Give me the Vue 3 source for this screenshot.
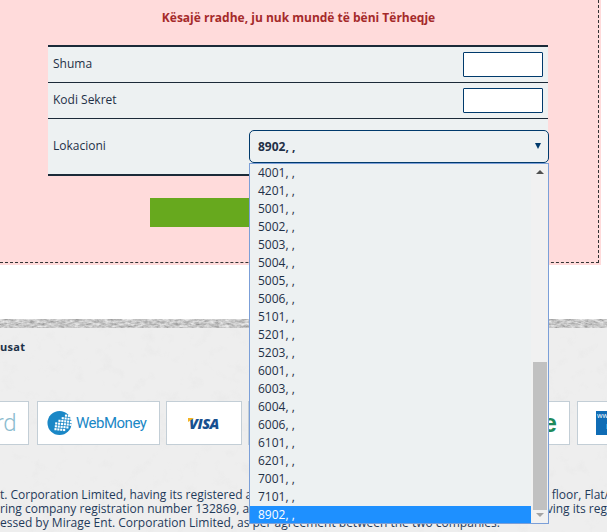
<script setup>
const options = ['4001','4201','5001','5002','5003','5004','5005','5006','5101','5201','5203','6001','6003','6004','6006','6101','6201','7001','7101','8902']
const dots = []
for (let r = 0; r < 6; r++) for (let c = 0; c < 6; c++) {
  if (r + c > 2 && r + c < 9 || r===2&&c===1) dots.push({ x: 10 + c * 3.1 - r * 0.4, y: 4 + r * 3.1 + c * 0.3 })
}
</script>

<template>
  <div class="page">
    <section class="panel">
      <h2 class="notice">Kësajë rradhe, ju nuk mundë të bëni Tërheqje</h2>
      <div class="form">
        <div class="row">
          <span class="lbl">Shuma</span>
          <input class="field" type="text" />
        </div>
        <div class="row">
          <span class="lbl-2">Kodi Sekret</span>
          <input class="field" type="text" />
        </div>
        <div class="row row-select">
          <span class="select-label">Lokacioni</span>
          <div class="select-wrap">
            <div class="select">
              <b>8902, ,</b>
              <i class="caret"></i>
            </div>
            <div class="dropdown">
              <ul class="list">
                <li v-for="o in options" :key="o" :class="{ on: o === '8902' }">{{ o }}, ,</li>
              </ul>
              <div class="scroll">
                <i class="arrow up"></i>
                <div class="track"><div class="thumb"></div></div>
                <i class="arrow down"></i>
              </div>
            </div>
          </div>
        </div>
      </div>
      <div class="btn"></div>
    </section>

    <div class="gap"></div>

    <footer class="footer">
      <svg class="texture" width="607" height="213" aria-hidden="true">
        <filter id="soft" x="0" y="0" width="100%" height="100%">
          <feTurbulence type="fractalNoise" baseFrequency="0.07" numOctaves="4" seed="7" />
          <feColorMatrix values="0 0 0 0 0.65  0 0 0 0 0.65  0 0 0 0 0.65  1.4 0 0 0 -0.78" />
        </filter>
        <filter id="rough" x="0" y="0" width="100%" height="100%">
          <feTurbulence type="fractalNoise" baseFrequency="0.2 0.45" numOctaves="3" seed="11" />
          <feColorMatrix values="0.75 0 0 0 0.2  0.75 0 0 0 0.2  0.75 0 0 0 0.2  0 0 0 0 1" />
        </filter>
        <rect y="9" width="607" height="204" filter="url(#soft)" opacity="0.3" />
        <rect width="607" height="9" filter="url(#rough)" />
      </svg>
      <div class="footer-body">
        <div class="title">usat</div>
        <div class="logos">
          <div class="card c1"><span class="rd">rd</span></div>
          <div class="card c2">
            <svg width="26" height="26" viewBox="0 0 28 28">
              <circle cx="13.5" cy="14" r="13" fill="#1a87c6" />
              <rect v-for="(d, i) in dots" :key="i" :x="d.x" :y="d.y" width="2.3" height="2.3" fill="#fff" />
            </svg>
            <span class="wm">WebMoney</span>
          </div>
          <div class="card c3"><span class="visa">VISA</span></div>
          <div class="card c4"><span class="e">e</span></div>
          <div class="card c5">
            <div class="amex"><span>www</span><span class="amex-d">D</span></div>
          </div>
        </div>
        <div class="legal">
          <p><span>t. Corporation Limited, having its registered a</span><span class="tail">floor, Flat/</span></p>
          <p><span>ring company registration number 132869, a</span><span>ving its reg</span></p>
          <p><span>essed by Mirage Ent. Corporation Limited, as per agreement between the two companies.</span></p>
        </div>
      </div>
    </footer>
  </div>
</template>

<style>
html, body { margin: 0; background: #fff; overflow: hidden; }
</style>

<style scoped>
.page {
  width: 607px;
  height: 532px;
  overflow: hidden;
  position: relative;
  font-family: "Open Sans", "Noto Sans", sans-serif;
  font-size: 12px;
  color: #1f3047;
}
.panel {
  width: 601px;
  height: 265px;
  box-sizing: border-box;
  padding-top: 10px;
  background: #ffdbdb;
  position: relative;
}
.panel::after {
  content: "";
  position: absolute;
  left: 0;
  top: 0;
  width: 599px;
  height: 263px;
  box-sizing: border-box;
  border-right: 1px dashed #333;
  border-bottom: 1px dashed #333;
  pointer-events: none;
}
.notice {
  margin: 0 0 18px;
  height: 17px;
  line-height: 15px;
  font-size: 12px;
  font-weight: 700;
  text-align: center;
  color: #a52a2a;
  width: 597px;
}
.form {
  width: 500px;
  margin-left: 48px;
  background: #edf1f2;
  border-top: 2px solid #1b2a38;
  border-bottom: 2px solid #1b2a38;
}
.row {
  display: flex;
  justify-content: space-between;
  align-items: center;
  box-sizing: border-box;
  height: 36px;
  padding: 0 5px;
  border-bottom: 1px solid #1b2a38;
}
.lbl { margin-top: -2px; }
.lbl-2 { margin-top: -2px; }
.field {
  width: 80px;
  height: 25px;
  box-sizing: border-box;
  margin: 0;
  padding: 0;
  border: 1px solid #003a6c;
  border-radius: 1px;
  background: #fff;
  outline: none;
}
.row-select {
  height: 55px;
  border-bottom: 0;
  padding: 0 0 0 5px;
  align-items: flex-start;
}
.select-label { margin-top: 18px; }
.select-wrap {
  position: relative;
  width: 300px;
  margin-top: 11px;
  margin-right: -1px;
}
.select {
  height: 33px;
  box-sizing: border-box;
  border: 1px solid #003a6c;
  border-radius: 5px;
  padding: 0 8px;
  display: flex;
  align-items: center;
  justify-content: space-between;
  font-size: 12px;
}
.select b { font-weight: 700; }
.caret {
  width: 0;
  height: 0;
  border-left: 3.5px solid transparent;
  border-right: 3.5px solid transparent;
  border-top: 6px solid #003a6c;
  margin-right: -1px;
  margin-top: -1px;
}
.dropdown {
  position: absolute;
  z-index: 5;
  left: 0;
  top: 33px;
  width: 300px;
  height: 361px;
  box-sizing: border-box;
  border: 1px solid #7b9fd8;
  background: #edf1f2;
  display: flex;
}
.list {
  list-style: none;
  margin: 0;
  padding: 0;
  flex: 1;
  height: 359px;
  overflow: hidden;
}
.list li {
  height: 18px;
  line-height: 17px;
  padding-left: 8px;
  font-size: 12px;
}
.list li.on {
  background: #1e90ff;
  color: #fff;
}
.scroll {
  width: 17px;
  background: #f1f1f1;
  display: flex;
  flex-direction: column;
  align-items: center;
  position: relative;
}
.track {
  flex: 1;
  width: 100%;
  position: relative;
}
.thumb {
  position: absolute;
  left: 2px;
  right: 1px;
  bottom: 3px;
  height: 148px;
  background: #c1c1c1;
}
.arrow {
  width: 0;
  height: 0;
  border-left: 4px solid transparent;
  border-right: 4px solid transparent;
  flex: none;
}
.arrow.up { border-bottom: 4px solid #505050; margin: 6px 0 0; }
.arrow.down { border-top: 4px solid #a3a3a3; margin: 0 0 6px; }
.btn {
  width: 300px;
  height: 29px;
  margin: 22px 0 0 150px;
  background: #67a91e;
}
.gap { height: 54px; background: #fff; }
.footer {
  position: relative;
  height: 213px;
  box-sizing: border-box;
  padding-top: 9px;
  background: #eee;
  overflow: hidden;
}
.texture {
  position: absolute;
  left: 0;
  top: 0;
}
.footer-body { position: relative; }
.title {
  height: 17px;
  line-height: 17px;
  margin-top: 10px;
  font-size: 11px;
  font-weight: 700;
  letter-spacing: 0.3px;
  color: #1c3148;
}
.logos {
  display: flex;
  gap: 6px;
  margin: 46px 0 0 -51px;
}
.card {
  box-sizing: border-box;
  height: 44px;
  background: #fff;
  border: 1px solid #c3ced6;
  display: flex;
  align-items: center;
  justify-content: center;
  flex: none;
  overflow: hidden;
}
.c1 { width: 80px; justify-content: flex-end; padding-right: 12px; }
.c2 { width: 123px; gap: 3px; margin-left: 2px; padding-left: 9px; justify-content: flex-start; }
.c3 { width: 76px; position: relative; }
.c3::before {
  content: "";
  position: absolute;
  left: 21px;
  top: 16px;
  width: 0;
  height: 0;
  border-top: 4px solid #f4b425;
  border-right: 6px solid transparent;
}
.c4 { width: 322px; justify-content: flex-end; padding-right: 12px; }
.c5 { width: 60px; margin-left: 1px; justify-content: flex-start; padding-left: 18px; }
.rd {
  font-family: "Roboto", "Liberation Sans", sans-serif;
  font-size: 24px;
  font-weight: 300;
  color: #8cbccf;
  letter-spacing: -0.5px;
}
.wm {
  font-family: "Roboto", "Liberation Sans", sans-serif;
  font-size: 15px;
  color: #1a87c6;
  letter-spacing: -0.5px;
}
.visa {
  font-family: "Open Sans", sans-serif;
  font-size: 14.5px;
  font-weight: 800;
  font-style: italic;
  color: #17508f;
  letter-spacing: -0.5px;
}
.e {
  font-family: "Liberation Sans", sans-serif;
  font-size: 25px;
  font-weight: 700;
  color: #1f8a5c;
}
.amex {
  width: 24px;
  height: 24px;
  flex: none;
  background: #0f6cb5;
  color: #fff;
  font-size: 7px;
  line-height: 10px;
  padding-left: 1px;
  box-sizing: border-box;
  display: flex;
  flex-direction: column;
}
.amex-d { padding-left: 9px; font-size: 8px; }
.legal {
  margin-top: 43px;
  font-size: 12px;
  line-height: 14px;
  color: #1f3a5a;
  white-space: nowrap;
}
.legal p {
  margin: 0;
  display: flex;
  justify-content: space-between;
  width: 607px;
}
.tail { margin-right: -2px; }
</style>
